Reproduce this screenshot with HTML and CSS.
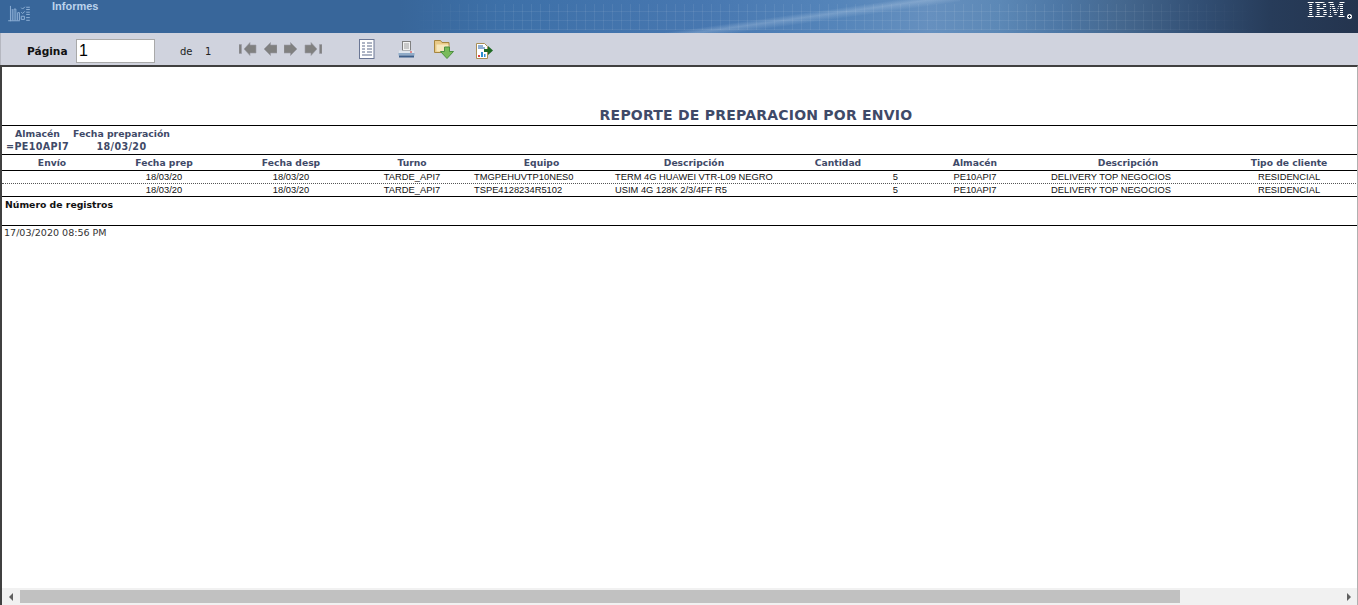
FILE: index.html
```html
<!DOCTYPE html>
<html lang="es">
<head>
<meta charset="utf-8">
<title>Informes</title>
<link rel="stylesheet" href="styles.css">
</head>
<body>
<header class="banner">
  <svg class="app-icon" width="22" height="18" viewBox="0 0 24 20" fill="none" stroke="#8fb0d6" stroke-width="1.100">
    <path d="M2.500 1v17M0 17.500h13M4.500 17V4.500M6.500 17V4.500h2V17M10.500 17V8.500h2V17"/>
    <path d="M14.500 3l1.500 1.500 2.500-2.500M14.500 8l1.500 1.500 2.500-2.500M14.500 12.500h3.500v3.500h-3.500zM20 2.500h4M20 5h4M20 8h4M20 10.500h4M20 14h4M20 17h4"/>
  </svg>
  <span class="app-name">Informes</span>
  <span class="ibm">IBM</span><span class="reg"></span>
</header>
<nav class="toolbar">
  <label class="page-label" for="page">Página</label>
  <input id="page" class="page-input" type="text" value="1">
  <span class="of">de</span><span class="total">1</span>
  <div class="nav-icons">
    <svg width="18" height="16" viewBox="0 0 18 16" fill="#808080" stroke="#9a9ca6" stroke-width=".6"><path d="M0 3.500h2.500v9H0zM5 8l6-6.500V4h6v8h-6v2.500z"/></svg>
    <svg width="13" height="16" viewBox="0 0 13 16" fill="#808080" stroke="#9a9ca6" stroke-width=".6"><path d="M0 8l6.500-6.500V4H13v8H6.500v2.500z"/></svg>
    <svg width="13" height="16" viewBox="0 0 13 16" fill="#808080" stroke="#9a9ca6" stroke-width=".6"><path d="M13 8L6.500 1.500V4H0v8h6.500v2.500z"/></svg>
    <svg width="18" height="16" viewBox="0 0 18 16" fill="#808080" stroke="#9a9ca6" stroke-width=".6"><path d="M15.500 3.500H18v9h-2.500zM13 8L7 1.500V4H1v8h6v2.500z"/></svg>
  </div>
  <div class="tool-icons">
    <svg class="t-doc" width="16" height="20" viewBox="0 0 16 20">
      <rect x=".5" y=".5" width="14.500" height="19" fill="#fff" stroke="#6a7694"/>
      <path d="M3 4h3M8 4h5M3 7h3M8 7h5M8 10h5M3 10h3M8 13h5M3 13h3M3 16h10" stroke="#5d6a8a"/>
    </svg>
    <svg class="t-print" width="17" height="17" viewBox="0 0 17 17">
      <rect x="4.500" y=".5" width="8" height="9" fill="#f2f2f2" stroke="#808080"/>
      <path d="M6 3h5M6 5h5M6 7h5" stroke="#a0a0a0"/>
      <path d="M1 9.500h15V12H1z" fill="#dfe6ee"/>
      <path d="M.5 12h16v2.500H.5z" fill="#8fabc8"/>
      <path d="M1 14.500h15v2H1z" fill="#3d5f8a"/>
      <path d="M12 11h2" stroke="#d33"/>
    </svg>
    <svg class="t-folder" width="21" height="20" viewBox="0 0 21 20">
      <path d="M.5 1.500h6l1.500 2h7v10H.5z" fill="#e8c987" stroke="#a5853f"/>
      <path d="M2.500 5.500h12v7h-12z" fill="#f6e7bd"/>
      <path d="M10.500 8h5v4.500h4l-6.500 7-6.500-7h4z" fill="#79bb5a" stroke="#4d9042"/>
    </svg>
    <svg class="t-export" width="17" height="16" viewBox="0 0 17 16">
      <path d="M.5.5h8l3 3v12H.5z" fill="#fff" stroke="#a98e55"/>
      <path d="M2 3h5M2 5h7" stroke="#1d5fa8"/>
      <path d="M2 12h2v2H2z" fill="#e04040"/><path d="M5 9h2v5H5z" fill="#2c8fd0"/><path d="M8 11h1.500v3H8z" fill="#2c8fd0"/>
      <path d="M8 6h4V3l5 4.500-5 4.500V9H8z" fill="#1f6a24"/>
    </svg>
  </div>
</nav>
<main class="viewer">
  <div class="scroller">
    <section class="report">
      <h1 class="title">REPORTE DE PREPARACION POR ENVIO</h1>
      <div class="params">
        <span>Almacén</span><span>Fecha preparación</span>
        <span class="value">=PE10API7</span><span class="value">18/03/20</span>
      </div>
      <div class="grid head">
        <span>Envío</span><span>Fecha prep</span><span>Fecha desp</span><span>Turno</span><span>Equipo</span><span>Descripción</span><span>Cantidad</span><span>Almacén</span><span>Descripción</span><span>Tipo de cliente</span>
      </div>
      <div class="grid row dotted">
        <span></span><span>18/03/20</span><span>18/03/20</span><span>TARDE_API7</span><span class="l6">TMGPEHUVTP10NES0</span><span class="l0">TERM 4G HUAWEI VTR-L09 NEGRO</span><span class="qty">5</span><span>PE10API7</span><span class="l4">DELIVERY TOP NEGOCIOS</span><span>RESIDENCIAL</span>
      </div>
      <div class="grid row solid">
        <span></span><span>18/03/20</span><span>18/03/20</span><span>TARDE_API7</span><span class="l6">TSPE4128234R5102</span><span class="l0">USIM 4G 128K 2/3/4FF R5</span><span class="qty">5</span><span>PE10API7</span><span class="l4">DELIVERY TOP NEGOCIOS</span><span>RESIDENCIAL</span>
      </div>
      <div class="count">Número de registros</div>
      <div class="stamp">17/03/2020 08:56 PM</div>
    </section>
  </div>
  <div class="hbar">
    <span class="arrow left"></span>
    <span class="thumb"></span>
    <span class="arrow right"></span>
  </div>
</main>
</body>
</html>
```
FILE: styles.css
```css
* { box-sizing: border-box; }
html, body { margin: 0; height: 605px; overflow: hidden; }
body { display: flex; flex-direction: column; background: #fff; font-family: "Liberation Sans", Arial, sans-serif; }

.banner {
  position: relative;
  flex: 0 0 33px;
  display: flex;
  align-items: flex-start;
  background: linear-gradient(90deg, #38669a 0, #38669a 400px, #3d70a8 500px, #4777b0 700px, #5585ba 840px, #6690bf 930px, #5c88b6 1000px, #4d77a5 1060px, #45688f 1120px, #324f74 1200px, #273c5a 1270px, #24344e 1358px);
}
.banner::before {
  content: "";
  position: absolute;
  inset: 0;
  background: linear-gradient(172deg, transparent 46%, rgba(205,222,240,.28) 52%, transparent 60%) 640px 0 / 320px 33px no-repeat;
}
.banner::after {
  content: "";
  position: absolute;
  inset: 4px 0 3px;
  background:
    repeating-linear-gradient(90deg, rgba(255,255,255,.07) 0 1px, transparent 1px 9px),
    repeating-linear-gradient(0deg, rgba(255,255,255,.07) 0 1px, transparent 1px 9px);
  -webkit-mask-image: linear-gradient(90deg, transparent 410px, #000 520px, #000 1100px, transparent 1260px);
  mask-image: linear-gradient(90deg, transparent 410px, #000 520px, #000 1100px, transparent 1260px);
}
.app-icon { position: relative; z-index: 1; margin: 5px 0 0 8px; }
.app-name { position: relative; z-index: 1; margin: 0 0 0 22px; font-size: 11px; font-weight: bold; line-height: 13px; color: #bcd3ec; }
.ibm {
  position: absolute; z-index: 1; left: 1307px; top: 0;
  font: bold 20.500px/21px "DejaVu Serif", serif;
  transform: scaleX(.77);
  transform-origin: 0 0;
  color: transparent;
  background: repeating-linear-gradient(180deg, #fff 0 1.500px, transparent 1.500px 2px);
  -webkit-background-clip: text; background-clip: text;
}
.reg { position: absolute; z-index: 1; left: 1347px; top: 14px; width: 5px; height: 5px; border-radius: 50%; background: radial-gradient(circle, #24344e 0 1px, #fff 1.200px); }

.toolbar {
  flex: 0 0 32px;
  display: flex;
  align-items: center;
  padding: 4px 0 0 27px;
  background: #d0d3de;
  border-left: 1px solid #b5b7c0;
}
.page-label { margin-left: -1px; width: 49px; font: bold 10.600px "DejaVu Sans", Verdana, sans-serif; color: #111; }
.page-input { width: 79px; height: 24px; padding: 0 0 0 2px; border: 1px solid #a9a9a9; background: #fff; font: 16px "Liberation Sans", Arial, sans-serif; color: #000; border-radius: 0; }
.of { margin-left: 25px; width: 25px; font: 10px "DejaVu Sans", Verdana, sans-serif; color: #222; }
.total { width: 34px; font: 10px "DejaVu Sans", Verdana, sans-serif; color: #222; }
.nav-icons { display: flex; gap: 7px; margin-top: -5px; }
.tool-icons { display: flex; align-items: center; margin: -4px 0 0 37px; }
.t-print { margin-left: 23px; margin-top: 1px; }
.t-folder { margin-left: 19px; }
.t-export { margin-left: 21px; margin-top: 3px; }

.viewer {
  flex: 1;
  min-height: 0;
  display: flex;
  flex-direction: column;
  border-top: 2px solid #404040;
  border-left: 2px solid #404040;
  border-right: 1px solid #b0b0b0;
}
.scroller { flex: 1; min-height: 0; overflow: hidden; }
.report { width: 1508px; }
.title {
  margin: 0;
  height: 59px;
  padding-bottom: 2px;
  display: flex; align-items: flex-end; justify-content: center;
  border-bottom: 1px solid #000;
  font: bold 14px/16px "DejaVu Sans", Verdana, sans-serif;
  letter-spacing: .22px;
  color: #3f4a68;
}
.params {
  display: grid;
  grid-template-columns: 65px 103px;
  grid-auto-rows: 13px;
  padding: 1px 0 0 3px;
  height: 29px;
  border-bottom: 1px solid #000;
  font: bold 9.300px/13px "DejaVu Sans", Verdana, sans-serif;
  color: #3f4a68;
  text-align: center;
}
.value { font-size: 9.600px; letter-spacing: .35px; }
.grid {
  display: grid;
  grid-template-columns: 100px 124px 130px 112px 147px 158px 130px 144px 162px 160px;
  text-align: center;
  white-space: nowrap;
}
.head {
  height: 16px;
  border-bottom: 1px solid #000;
  font: bold 9.200px/15px "DejaVu Sans", Verdana, sans-serif;
  color: #3f4a68;
}
.row { height: 13px; font-size: 9.330px; line-height: 12px; color: #111; }
.dotted { border-bottom: 1px dotted #555; }
.solid { border-bottom: 1px solid #000; }
.l6 { text-align: left; padding-left: 6px; }
.l0 { text-align: left; }
.l4 { text-align: left; padding-left: 4px; }
.qty { text-align: right; padding-right: 5px; }
.count {
  height: 29px;
  padding: 1px 0 0 3px;
  border-bottom: 1px solid #000;
  font: bold 9.300px/14px "DejaVu Sans", Verdana, sans-serif;
  color: #111;
}
.stamp { padding: 0 0 0 2px; font: 9.550px/13px "DejaVu Sans", Verdana, sans-serif; color: #333; }

.hbar {
  flex: 0 0 17px;
  display: flex;
  align-items: center;
  background: #f1f1f1;
}
.thumb { margin-left: 7px; width: 1160px; height: 13px; background: #c1c1c1; }
.arrow { width: 0; height: 0; border-style: solid; border-color: transparent; }
.left { margin-left: 7px; border-width: 4px 4px 4px 0; border-right-color: #606060; }
.right { margin-left: 167px; border-width: 4px 0 4px 4px; border-left-color: #606060; }
```
